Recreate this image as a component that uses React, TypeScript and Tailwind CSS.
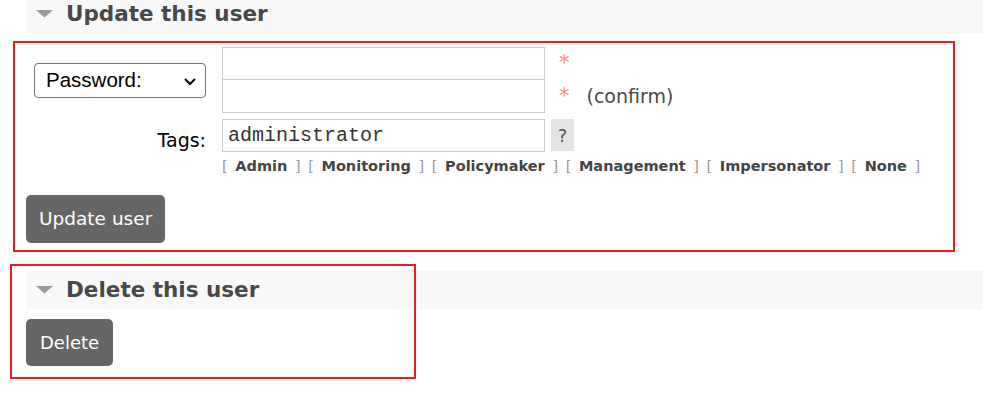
import React from "react";

const tags = ["Admin", "Monitoring", "Policymaker", "Management", "Impersonator", "None"];

function Triangle() {
  return (
    <svg width="17" height="8" viewBox="0 0 17 8" className="shrink-0">
      <polygon points="0,0 17,0 8.5,7.5" fill="#9a9a9a" />
    </svg>
  );
}

export default function App() {
  return (
    <div
      className="relative w-[983px] h-[393px] bg-white overflow-hidden text-[#484848]"
      style={{ fontFamily: '"DejaVu Sans", Verdana, sans-serif' }}
    >
      {/* Header 1 */}
      <div className="ml-[26px] mt-[-5px] h-[38px] bg-[#f8f8f8] flex items-center pl-[10px]">
        <Triangle />
        <span className="ml-[13px] text-[21.5px] font-bold text-[#484848] leading-none">Update this user</span>
      </div>

      {/* Form */}
      <div className="mt-[14px] pl-[34px]">
        <div className="grid grid-cols-[172px_auto] gap-x-[16px]">
          {/* Row 1 */}
          <div className="flex items-center">
            <div className="relative w-[172px] h-[35px]">
              <select
                className="appearance-none w-full h-full border border-[#767676] rounded-[4px] bg-white pl-[11px] text-[20.5px] text-black outline-none"
                style={{ fontFamily: '"Liberation Sans", Arial, sans-serif' }}
                defaultValue="password"
              >
                <option value="password">Password:</option>
              </select>
              <svg
                width="12"
                height="8"
                viewBox="0 0 12 8"
                className="absolute right-[10px] top-[15px] pointer-events-none"
              >
                <polyline points="1,1 6,6 11,1" fill="none" stroke="#000" strokeWidth="2" />
              </svg>
            </div>
          </div>
          <div className="flex flex-col">
            <div className="flex items-center">
              <input className="w-[323px] h-[33px] border border-[#cccccc] outline-none" type="password" />
              <span className="ml-[14px] text-[21px] text-[#ff8a8a] leading-none">*</span>
            </div>
            <div className="flex items-center">
              <input className="w-[323px] h-[33px] border border-[#cccccc] border-t-0 outline-none" type="password" />
              <span className="ml-[14px] text-[21px] text-[#ff8a8a] leading-none">*</span>
              <span className="ml-[17px] text-[19px] text-[#484848]">(confirm)</span>
            </div>
          </div>

          {/* Row 2 */}
          <div className="mt-[6px] text-right text-[19px] text-black pt-[12px] leading-none">Tags:</div>
          <div className="mt-[6px] flex flex-col">
            <div className="flex items-start">
              <input
                className="w-[323px] h-[33px] border border-[#cccccc] px-[5px] text-[20px] text-[#333] outline-none"
                style={{ fontFamily: '"Liberation Mono", "Courier New", monospace' }}
                defaultValue="administrator"
              />
              <span className="ml-[6px] w-[23px] h-[32px] bg-[#e4e4e4] flex items-center justify-center text-[18px] text-[#555]">
                ?
              </span>
            </div>
            <div className="mt-[4px] text-[14.5px] leading-[20px] whitespace-nowrap [word-spacing:3px]">
              {tags.map((t, i) => (
                <span key={t}>
                  {i > 0 && " "}
                  <span className="text-[#999999] font-normal">[</span>{" "}
                  <span className="font-bold text-[#444]">{t}</span>{" "}
                  <span className="text-[#999999] font-normal">]</span>
                </span>
              ))}
            </div>
          </div>
        </div>
      </div>

      <div className="ml-[26px] mt-[19px]">
        <button className="h-[48px] px-[13px] bg-[#666666] rounded-[5px] text-white text-[18.5px]">Update user</button>
      </div>

      {/* Header 2 */}
      <div className="ml-[26px] mt-[28px] h-[38px] bg-[#f8f8f8] flex items-center pl-[10px]">
        <Triangle />
        <span className="ml-[13px] text-[21.5px] font-bold text-[#484848] leading-none">Delete this user</span>
      </div>
      <div className="ml-[26px] mt-[10px]">
        <button className="h-[47px] px-[14px] bg-[#666666] rounded-[5px] text-white text-[18px]">Delete</button>
      </div>

      {/* Annotation boxes */}
      <div className="absolute left-[13px] top-[41px] w-[942px] h-[211px] border-2 border-[#ed1c24] pointer-events-none" />
      <div className="absolute left-[10px] top-[264px] w-[406px] h-[115px] border-2 border-[#ed1c24] pointer-events-none" />
    </div>
  );
}
